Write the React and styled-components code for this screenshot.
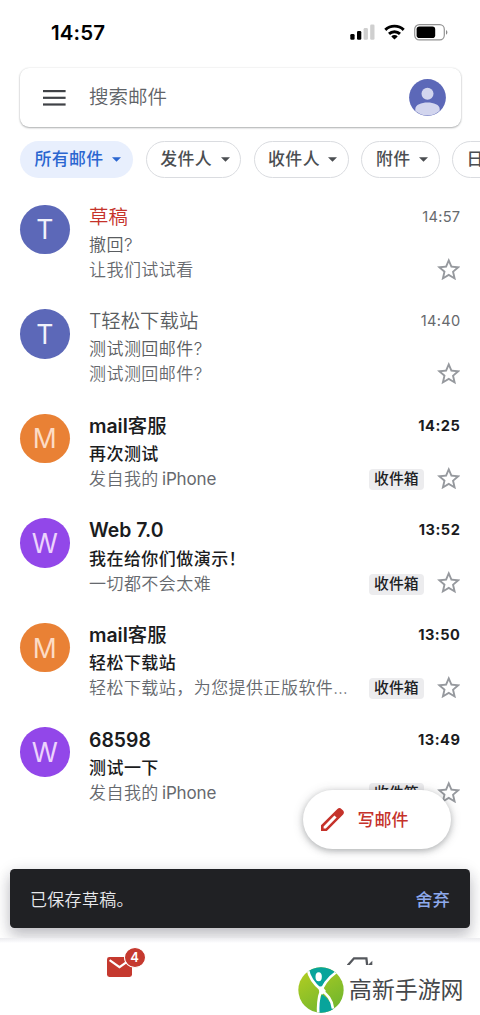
import React from "react";
import styled, { createGlobalStyle } from "styled-components";

const GlobalStyle = createGlobalStyle`
  * { box-sizing: border-box; }
  body {
    margin: 0;
    background: #fff;
    font-family: Inter, "Noto Sans CJK SC", sans-serif;
    color: #202124;
  }
  svg { display: block; flex: none; }
`;

const Screen = styled.div`
  position: relative;
  display: flex;
  flex-direction: column;
  width: 480px;
  height: 1015px;
  overflow: hidden;
  background: #fff;
`;

const StatusBar = styled.header`
  display: flex;
  align-items: center;
  justify-content: space-between;
  height: 68px;
  padding: 0 32px 4px 51px;
  flex: none;
`;

const Clock = styled.span`
  font-size: 20.5px;
  font-weight: 600;
  letter-spacing: 0.15px;
  color: #000;
`;

const StatusIcons = styled.div`
  display: flex;
  align-items: center;
  gap: 9px;
`;

const SearchBar = styled.div`
  display: flex;
  align-items: center;
  height: 59px;
  margin: 0 19.5px;
  padding: 0 15px 0 23.5px;
  border-radius: 9px;
  background: #fff;
  box-shadow: 0 1px 2px rgba(60, 64, 67, 0.4), 0 0 2px rgba(60, 64, 67, 0.14);
  flex: none;
`;

const SearchText = styled.span`
  flex: 1;
  margin-left: 23px;
  padding-bottom: 2px;
  font-size: 19.5px;
  line-height: 28px;
  color: #5f6368;
  font-weight: 350;
`;

const Chips = styled.nav`
  display: flex;
  gap: 12.5px;
  height: 37px;
  margin-top: 14px;
  padding-left: 20px;
  flex: none;
`;

const ChipButton = styled.button`
  display: flex;
  align-items: center;
  gap: 8.5px;
  flex: none;
  height: 37px;
  padding: 0 ${(p) => (p.$active ? "12px 1px 14.5px" : "10.5px 1px 13.5px")};
  border: ${(p) => (p.$active ? "0" : "1.3px solid #dadce0")};
  border-radius: 19px;
  background: ${(p) => (p.$active ? "#e8effd" : "#fff")};
  color: ${(p) => (p.$active ? "#2b66d0" : "#4b4e52")};
  font: 500 16.9px/24px Inter, "Noto Sans CJK SC", sans-serif;
  letter-spacing: 0.4px;
`;

const MailList = styled.main`
  flex: 1;
  min-height: 0;
  padding-top: 15px;
  overflow: hidden;
`;

const MailRow = styled.article`
  display: flex;
  height: 104.6px;
  padding: 10.5px 20px 0;
`;

const Avatar = styled.div`
  display: flex;
  align-items: center;
  justify-content: center;
  flex: none;
  width: 49.5px;
  height: 49.5px;
  margin: 1px 19.5px 0 0;
  border-radius: 50%;
  background: ${(p) => p.$bg};
  color: ${(p) => p.$fg};
  font-size: 26.5px;
  font-weight: 400;
`;

const MailBody = styled.div`
  flex: 1;
  min-width: 0;
`;

const TopLine = styled.div`
  display: flex;
  align-items: center;
  height: 28.5px;
  padding-bottom: 2.2px;
`;

const SubjectLine = styled.div`
  display: flex;
  align-items: center;
  height: 26.5px;
`;

const SnippetLine = styled.div`
  display: flex;
  align-items: center;
  height: 23.5px;
`;

const Sender = styled.span`
  flex: 1;
  font-size: 19.4px;
  line-height: 26px;
  font-weight: ${(p) => (p.$unread ? 500 : 350)};
  color: ${(p) => (p.$draft ? "#c5322a" : p.$unread ? "#1b1c1e" : "#5a5d61")};
`;

const SenderLatin = styled.span`
  font-weight: ${(p) => (p.$unread ? 600 : 350)};
`;

const Time = styled.time`
  font-size: 14.6px;
  line-height: 26px;
  letter-spacing: ${(p) => (p.$unread ? 0.5 : 0.3)}px;
  margin-right: -0.4px;
  font-weight: ${(p) => (p.$unread ? 700 : 400)};
  color: ${(p) => (p.$unread ? "#1b1c1e" : "#66696d")};
`;

const Subject = styled.span`
  font-size: 17px;
  line-height: 25px;
  letter-spacing: 0.45px;
  font-weight: ${(p) => (p.$unread ? 500 : 350)};
  color: ${(p) => (p.$unread ? "#1b1c1e" : "#5a5d61")};
`;

const Snippet = styled.span`
  flex: 1;
  white-space: nowrap;
  font-size: 17px;
  line-height: 25px;
  letter-spacing: 0.45px;
  font-weight: 350;
  color: #66696e;
`;

const SnippetLatin = styled.span`
  margin-left: -1.5px;
  letter-spacing: -0.15px;
  font-weight: 400;
`;

const Label = styled.span`
  flex: none;
  height: 21px;
  margin: 0 13px 0 0;
  padding: 0 5px;
  border-radius: 4px;
  background: #ececee;
  color: #202124;
  font-size: 14.8px;
  line-height: 20.5px;
  font-weight: 500;
`;

const StarButton = styled.span`
  flex: none;
  padding-bottom: 3px;
`;

const ComposeButton = styled.button`
  position: absolute;
  left: 303px;
  top: 790px;
  display: flex;
  align-items: center;
  gap: 13.5px;
  width: 148px;
  height: 59px;
  padding: 0 0 0 18px;
  border: 0;
  border-radius: 30px;
  background: #fff;
  color: #c5322a;
  font: 500 17px/24px Inter, "Noto Sans CJK SC", sans-serif;
  box-shadow: 0 2px 6px rgba(60, 64, 67, 0.32), 0 1px 12px rgba(60, 64, 67, 0.16);
`;

const Snackbar = styled.div`
  position: absolute;
  left: 10px;
  top: 869px;
  display: flex;
  align-items: center;
  justify-content: space-between;
  width: 460px;
  height: 59px;
  padding: 0 20px 1px;
  border-radius: 4.5px;
  background: #202124;
  color: #e8eaed;
  font-size: 17px;
  font-weight: 350;
  letter-spacing: 0.3px;
  box-shadow: 0 8px 14px rgba(32, 33, 50, 0.22), 0 2px 16px rgba(32, 33, 50, 0.12);
`;

const SnackAction = styled.span`
  color: #8ea9ec;
  font-weight: 500;
`;

const BottomNav = styled.footer`
  position: relative;
  z-index: 1;
  display: flex;
  flex: none;
  height: 77px;
  background: linear-gradient(#ececef 0, #f6f6f8 3px, #fff 5px);
`;

const NavTab = styled.div`
  display: flex;
  justify-content: center;
  flex: 1;
  padding-top: 19px;
`;

const MailTabIcon = styled.div`
  position: relative;
  width: 25px;
  height: 20px;
  margin-right: 1px;
`;

const Badge = styled.span`
  position: absolute;
  left: 16.5px;
  top: -10px;
  width: 22px;
  height: 21px;
  border: 1.7px solid #fff;
  border-radius: 50%;
  background: #c5392f;
  color: #fff;
  font-size: 13px;
  line-height: 18px;
  font-weight: 600;
  text-align: center;
`;

const SiteMark = styled.div`
  position: absolute;
  z-index: 2;
  left: 298px;
  top: 967px;
  display: flex;
  align-items: center;
  gap: 5px;
  color: #45474a;
  font-size: 22.9px;
  line-height: 46px;
`;

const Caret = () => (
  <svg width="9" height="5" viewBox="0 0 10 5">
    <path d="M0 0h10L5 5z" fill="currentColor" />
  </svg>
);

const Star = () => (
  <svg width="23.5" height="22.3" viewBox="2 2 20 19">
    <path
      fill="#96999e"
      d="M22 9.24l-7.19-.62L12 2 9.19 8.63 2 9.24l5.46 4.73L5.82 21 12 17.27 18.18 21l-1.63-7.03L22 9.24zM12 15.4l-3.76 2.27 1-4.28-3.32-2.88 4.38-.38L12 6.1l1.71 4.04 4.38.38-3.32 2.88 1 4.28L12 15.4z"
    />
  </svg>
);

const Signal = () => (
  <svg width="25" height="16" viewBox="0 0 25 16">
    <rect x="0.3" y="10" width="4.3" height="5.7" rx="1.3" />
    <rect x="7" y="7" width="4.3" height="8.7" rx="1.3" />
    <rect x="13.6" y="4" width="4.3" height="11.7" rx="1.3" fill="#cfcfcf" />
    <rect x="20.2" y="0.5" width="4.3" height="15.2" rx="1.3" fill="#cfcfcf" />
  </svg>
);

const Wifi = () => (
  <svg width="21" height="16" viewBox="0 0 21 16" fill="none" stroke="#000" strokeWidth="2.9">
    <path d="M1.3 5.9a13.2 13.2 0 0 1 18.4 0" />
    <path d="M5 9.9a8 8 0 0 1 11 0" />
    <path d="M10.5 15.5L7.3 12.4a4.6 4.6 0 0 1 6.4 0z" fill="#000" stroke="none" />
  </svg>
);

const Battery = () => (
  <svg width="34" height="17" viewBox="0 0 34 17">
    <rect x="0.7" y="0.7" width="29.6" height="15.2" rx="4.6" fill="none" stroke="#929292" strokeWidth="1.2" />
    <rect x="2.6" y="2.6" width="18.6" height="11.4" rx="2.8" />
    <path d="M32 6c1.9 1 1.9 3.7 0 4.7z" fill="#8a8a8a" />
  </svg>
);

const MenuIcon = () => (
  <svg width="23" height="16" viewBox="0 0 23 16" fill="#3f4246">
    <rect y="0" width="22.6" height="2.2" />
    <rect y="6.7" width="22.6" height="2.2" />
    <rect y="13.4" width="22.6" height="2.2" />
  </svg>
);

const Profile = () => (
  <svg width="37" height="37" viewBox="0 0 37 37">
    <defs>
      <clipPath id="face">
        <circle cx="18.5" cy="18.5" r="18" />
      </clipPath>
    </defs>
    <circle cx="18.5" cy="18.5" r="18.4" fill="#5c68b8" />
    <g fill="#d2d5ee" clipPath="url(#face)">
      <circle cx="18.5" cy="14.8" r="6" />
      <path d="M6.3 38v-8c0-4.3 6-6.6 12.2-6.6s12.2 2.3 12.2 6.6v8z" />
    </g>
  </svg>
);

const Pencil = () => (
  <svg width="23" height="23" viewBox="0 0 23 23" fill="#c5322a">
    <path
      fillRule="evenodd"
      d="M0 17.3L16.4 1C17.6-.2 19.3-.2 20.4.9l1.7 1.7c1.1 1.1 1.1 2.8 0 4L5.8 23H0zM2.6 18.4v2h2.2L15.6 9.6l-2.2-2.1z"
    />
  </svg>
);

const Envelope = () => (
  <svg width="25" height="20" viewBox="0 0 25 20">
    <rect width="25" height="20" rx="2.4" fill="#c5392f" />
    <path d="M2.6 3.2l9.9 6.9L22.4 3.2" fill="none" stroke="#fff" strokeWidth="2.2" />
  </svg>
);

const MeetIcon = () => (
  <svg width="26" height="8" viewBox="0 0 26 8">
    <path d="M0.6 8.6L7 1.3h12.4l.8 7.3" fill="none" stroke="#55585d" strokeWidth="2.3" />
    <path d="M21 8l4.3-4.2V8z" fill="#55585d" />
  </svg>
);

const Logo = () => (
  <svg width="46" height="46" viewBox="0 0 138 138">
    <defs>
      <linearGradient id="leaf" x1="0" y1="0" x2="0.6" y2="1">
        <stop offset="0" stopColor="#b8cf20" />
        <stop offset="1" stopColor="#73b72d" />
      </linearGradient>
      <clipPath id="disc">
        <circle cx="69" cy="69" r="68" />
      </clipPath>
    </defs>
    <g clipPath="url(#disc)">
      <rect width="138" height="138" fill="url(#leaf)" />
      <path d="M30 0h85v18C95 34 79 47 70 65 48 50 35 30 30 8z" fill="#08a49b" />
      <path d="M72 82c16 12 29 25 33 45l-6 11H62c-3-20 0-38 10-56z" fill="#08a49b" />
      <path d="M29 6c5 28 20 46 40 62 19 15 33 29 36 57" fill="none" stroke="#fff" strokeWidth="8" />
      <path d="M119 12C88 34 70 58 64 88c-3 16-5 32-3 50" fill="none" stroke="#fff" strokeWidth="8" />
      <path d="M60 59l13-1 11 14-12 11-8-9z" fill="#fff" />
      <ellipse cx="62" cy="29" rx="9.5" ry="13.5" fill="#fff" />
    </g>
  </svg>
);

const INDIGO = { bg: "#5c68b8", fg: "#f1f2fb" };
const ORANGE = { bg: "#e98135", fg: "#fcdcc5" };
const PURPLE = { bg: "#9247e9", fg: "#ecd3fc" };

const mails = [
  { letter: "T", tone: INDIGO, sender: "草稿", time: "14:57", subject: "撤回?", snippet: "让我们试试看", draft: true },
  { letter: "T", tone: INDIGO, latin: "T", sender: "轻松下载站", time: "14:40", subject: "测试测回邮件?", snippet: "测试测回邮件?" },
  { letter: "M", tone: ORANGE, latin: "mail", sender: "客服", time: "14:25", subject: "再次测试", snippet: "发自我的", tail: " iPhone", unread: true },
  { letter: "W", tone: PURPLE, latin: "Web 7.0", time: "13:52", subject: "我在给你们做演示！", snippet: "一切都不会太难", unread: true },
  { letter: "M", tone: ORANGE, latin: "mail", sender: "客服", time: "13:50", subject: "轻松下载站", snippet: "轻松下载站，为您提供正版软件…", unread: true },
  { letter: "W", tone: PURPLE, latin: "68598", time: "13:49", subject: "测试一下", snippet: "发自我的", tail: " iPhone", unread: true },
];

const chips = ["所有邮件", "发件人", "收件人", "附件", "日期"];

function Mail({ mail }) {
  return (
    <MailRow>
      <Avatar $bg={mail.tone.bg} $fg={mail.tone.fg}>{mail.letter}</Avatar>
      <MailBody>
        <TopLine>
          <Sender $unread={mail.unread} $draft={mail.draft}>
            {mail.latin && <SenderLatin $unread={mail.unread}>{mail.latin}</SenderLatin>}
            {mail.sender}
          </Sender>
          <Time $unread={mail.unread}>{mail.time}</Time>
        </TopLine>
        <SubjectLine>
          <Subject $unread={mail.unread}>{mail.subject}</Subject>
        </SubjectLine>
        <SnippetLine>
          <Snippet>
            {mail.snippet}
            {mail.tail && <SnippetLatin>{mail.tail}</SnippetLatin>}
          </Snippet>
          {mail.unread && <Label>收件箱</Label>}
          <StarButton>
            <Star />
          </StarButton>
        </SnippetLine>
      </MailBody>
    </MailRow>
  );
}

export default function App() {
  return (
    <Screen>
      <GlobalStyle />
      <StatusBar>
        <Clock>14:57</Clock>
        <StatusIcons>
          <Signal />
          <Wifi />
          <Battery />
        </StatusIcons>
      </StatusBar>
      <SearchBar>
        <MenuIcon />
        <SearchText>搜索邮件</SearchText>
        <Profile />
      </SearchBar>
      <Chips>
        {chips.map((name, i) => (
          <ChipButton key={name} $active={i === 0}>
            {name}
            <Caret />
          </ChipButton>
        ))}
      </Chips>
      <MailList>
        {mails.map((mail) => (
          <Mail key={mail.time} mail={mail} />
        ))}
      </MailList>
      <ComposeButton>
        <Pencil />
        写邮件
      </ComposeButton>
      <Snackbar>
        <span>已保存草稿。</span>
        <SnackAction>舍弃</SnackAction>
      </Snackbar>
      <BottomNav>
        <NavTab>
          <MailTabIcon>
            <Envelope />
            <Badge>4</Badge>
          </MailTabIcon>
        </NavTab>
        <NavTab>
          <MeetIcon />
        </NavTab>
      </BottomNav>
      <SiteMark>
        <Logo />
        高新手游网
      </SiteMark>
    </Screen>
  );
}
